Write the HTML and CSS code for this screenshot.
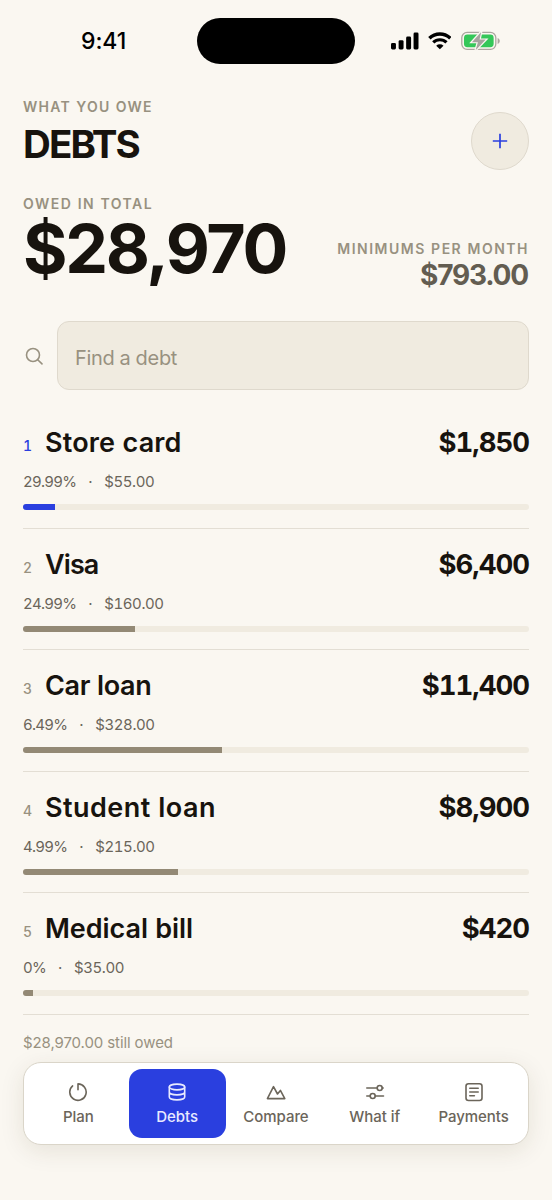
FILE: index.html
```html
<!DOCTYPE html>
<html lang="en">
<head>
<meta charset="utf-8">
<title>Debts</title>
<link rel="stylesheet" href="styles.css">
</head>
<body>
<div class="statusbar">
  <div class="clock">9:41</div>
  <div class="island"></div>
  <div class="indicators">
    <svg class="signal" width="28" height="18" viewBox="0 0 28 18"><rect x="0" y="11" width="5" height="6.5" rx="1.4"/><rect x="7.7" y="8.2" width="5" height="9.3" rx="1.4"/><rect x="15.3" y="4.5" width="5" height="13" rx="1.4"/><rect x="22.8" y="0.5" width="5" height="17" rx="1.4"/></svg>
    <svg class="wifi" width="24" height="18" viewBox="0 0 24 18"><path d="M1.400 6.200a15.200 15.200 0 0 1 21.200 0" fill="none" stroke="#000" stroke-width="3.500"/><path d="M5.300 10.500a9.600 9.600 0 0 1 13.400 0" fill="none" stroke="#000" stroke-width="3.200"/><path d="M12 17.400l-3.700-3.600a5.300 5.300 0 0 1 7.400 0z"/></svg>
    <svg class="battery" width="40" height="20" viewBox="0 0 40 20"><rect x="0.800" y="1.300" width="34.400" height="17.200" rx="5.400" fill="none" stroke="#aaa69f" stroke-width="1.300"/><rect x="3" y="3.500" width="30" height="12.800" rx="3.400" fill="#34c759"/><path d="M37 7v6c1.300-.5 2.200-1.700 2.200-3s-.9-2.500-2.200-3z" fill="#aaa69f"/><path d="M20.400.8 11 11.200h6.100L14.800 19.300 25 8.600h-6.200z" fill="#a5a49f" stroke="#faf7f1" stroke-width="2.400" paint-order="stroke"/></svg>
  </div>
</div>
<main class="screen">
  <header class="header">
    <div>
      <div class="eyebrow eyebrow-title">WHAT YOU OWE</div>
      <h1 class="title">DEBTS</h1>
    </div>
    <button class="add" aria-label="Add debt"><svg width="16" height="16" viewBox="0 0 16 16"><path d="M8 .8v14.400M.8 8h14.400"/></svg></button>
  </header>
  <section class="summary">
    <div>
      <div class="eyebrow eyebrow-total">OWED IN TOTAL</div>
      <div class="total">$28,970</div>
    </div>
    <div class="minimums">
      <div class="eyebrow eyebrow-min">MINIMUMS PER MONTH</div>
      <div class="min-value">$793.00</div>
    </div>
  </section>
  <div class="search">
    <svg width="19" height="19" viewBox="0 0 19 19"><circle cx="8" cy="8" r="6.500"/><path d="M12.700 12.700l4.300 4.200"/></svg>
    <div class="field">Find a debt</div>
  </div>
  <ul class="debts">
    <li class="debt first">
      <div class="line"><span class="rank">1</span><span class="name n1">Store card</span><span class="amount">$1,850</span></div>
      <div class="meta"><span class="rate">29.99%</span><span class="dot">·</span><span>$55.00</span></div>
      <div class="bar"><div class="fill" style="width:6.38%"></div></div>
    </li>
    <li class="debt">
      <div class="line"><span class="rank">2</span><span class="name n2">Visa</span><span class="amount">$6,400</span></div>
      <div class="meta"><span class="rate">24.99%</span><span class="dot">·</span><span>$160.00</span></div>
      <div class="bar"><div class="fill" style="width:22.1%"></div></div>
    </li>
    <li class="debt">
      <div class="line"><span class="rank">3</span><span class="name n3">Car loan</span><span class="amount">$11,400</span></div>
      <div class="meta"><span class="rate">6.49%</span><span class="dot">·</span><span>$328.00</span></div>
      <div class="bar"><div class="fill" style="width:39.35%"></div></div>
    </li>
    <li class="debt">
      <div class="line"><span class="rank">4</span><span class="name n4">Student loan</span><span class="amount">$8,900</span></div>
      <div class="meta"><span class="rate">4.99%</span><span class="dot">·</span><span>$215.00</span></div>
      <div class="bar"><div class="fill" style="width:30.7%"></div></div>
    </li>
    <li class="debt">
      <div class="line"><span class="rank">5</span><span class="name n5">Medical bill</span><span class="amount">$420</span></div>
      <div class="meta"><span class="rate">0%</span><span class="dot">·</span><span>$35.00</span></div>
      <div class="bar"><div class="fill" style="width:2%"></div></div>
    </li>
  </ul>
  <div class="owed">$28,970.00 still owed</div>
  <nav class="tabs">
    <a class="tab"><svg viewBox="0 0 20 20"><path d="M4.600 3.900a8.200 8.200 0 1 0 5.400-2v5.800"/></svg><span>Plan</span></a>
    <a class="tab active"><svg viewBox="0 0 20 20"><ellipse cx="10" cy="5" rx="7.700" ry="2.900"/><path d="M2.300 5v10c0 1.600 3.400 2.900 7.700 2.900s7.700-1.300 7.700-2.900V5M2.300 10c0 1.600 3.400 2.900 7.700 2.900s7.700-1.300 7.700-2.900"/></svg><span>Debts</span></a>
    <a class="tab"><svg viewBox="0 0 20 20"><path d="M1.400 16.600 7.500 4.700l4 7.300 2.900-3.600 4.400 8.200z"/></svg><span>Compare</span></a>
    <a class="tab"><svg viewBox="0 0 20 20"><path d="M1.800 6h10.400M17.200 6h1M1.800 14h3.400M10.200 14h8.300"/><circle cx="14.700" cy="6" r="2.500"/><circle cx="7.700" cy="14" r="2.500"/></svg><span>What if</span></a>
    <a class="tab"><svg viewBox="0 0 20 20"><rect x="2" y="1.700" width="16" height="16.800" rx="2.500"/><path d="M5.800 6.200h8.400M5.800 10h8.400M5.800 13.800h4.600"/></svg><span>Payments</span></a>
  </nav>
</main>
</body>
</html>
```
FILE: styles.css
```css
* { box-sizing: border-box; }
body {
  margin: 0;
  width: 552px;
  height: 1200px;
  overflow: hidden;
  background: #faf7f1;
  color: #17130e;
  font-family: Inter, "Liberation Sans", sans-serif;
  font-variant-numeric: tabular-nums;
}
.statusbar {
  height: 82px;
  padding: 18px 51px 0 81px;
  display: flex;
}
.clock {
  width: 116px;
  padding-top: 9px;
  font-size: 23px;
  line-height: 28px;
  font-weight: 550;
  letter-spacing: -0.1px;
  color: #000;
  font-variant-numeric: normal;
}
.island { width: 158px; height: 46px; border-radius: 23px; background: #000; }
.indicators { width: 110px; margin-left: auto; display: flex; align-items: flex-start; padding-top: 13px; }
.indicators .wifi { margin: 1px 0 0 9px; }
.indicators .signal { margin-top: 1px; }
.indicators .battery { margin-left: 10px; }
.screen { padding: 0 23px; }
.header { height: 104px; display: flex; justify-content: space-between; padding-top: 15px; }
.eyebrow { font-size: 14px; line-height: 20px; font-weight: 600; color: #989180; white-space: nowrap; }
.eyebrow-title { letter-spacing: 1.3px; }
.eyebrow-total { letter-spacing: 1.5px; }
.eyebrow-min { letter-spacing: 1.5px; }
.title { margin: 5px 0 0; font-size: 38.5px; line-height: 44px; font-weight: 700; letter-spacing: -1.9px; }
.add {
  width: 58px; height: 58px; margin-top: 15px; padding: 0;
  display: flex; align-items: center; justify-content: center;
  border: 1px solid #dfd9cd; border-radius: 50%; background: #f0ebe0;
}
.add svg { fill: none; stroke: #2a3fdf; stroke-width: 1.7; }
.summary { height: 135px; padding-top: 8px; display: flex; justify-content: space-between; }
.total { font-size: 68px; line-height: 68px; font-weight: 700; letter-spacing: -2.3px; font-variant-numeric: normal; }
.minimums { padding-top: 45px; text-align: right; }
.min-value { padding-right: 1px; font-size: 28px; line-height: 32px; font-weight: 700; letter-spacing: -1.2px; color: #635d51; font-variant-numeric: normal; }
.search { height: 69px; display: flex; align-items: center; }
.search svg { margin: 2px 13px 0 2px; fill: none; stroke: #989180; stroke-width: 1.600; stroke-linecap: round; }
.field {
  flex: 1; height: 69px; padding: 5px 18px 0 17px;
  display: flex; align-items: center;
  border: 1px solid #dfd9cd; border-radius: 12px; background: #f0ebe0;
  font-size: 20px; letter-spacing: -0.3px; color: #989180;
}
.debts { list-style: none; margin: 17px 0 0; padding: 0; }
.debt { height: 121.5px; padding-top: 18px; border-bottom: 1px solid #e3ded4; }
.line { display: flex; align-items: baseline; height: 34px; line-height: 34px; }
.rank { width: 22px; font-size: 14px; font-weight: 500; color: #989180; position: relative; top: -1px; }
.first .rank { color: #2a3fdf; }
.name { font-size: 27px; font-weight: 600; }
.n1 { letter-spacing: 0.15px; }
.n2 { letter-spacing: -0.9px; }
.n3 { letter-spacing: -0.35px; }
.n4 { letter-spacing: 0.45px; }
.n5 { letter-spacing: -0.05px; }
.amount { margin-left: auto; font-size: 27.5px; font-weight: 700; letter-spacing: -1px; }
.meta { display: flex; margin-top: 13px; font-size: 15px; line-height: 20px; color: #6b655a; letter-spacing: -0.4px; }
.rate { letter-spacing: -0.75px; }
.dot { width: 28px; text-align: center; }
.bar { height: 6px; margin-top: 12px; border-radius: 3px; overflow: hidden; background: #f0ebe0; }
.fill { height: 6px; background: #938975; }
.first .fill { background: #2a3fdf; }
.owed { margin-top: 18px; font-size: 15px; line-height: 20px; letter-spacing: -0.1px; color: #989180; font-variant-numeric: normal; }
.tabs {
  height: 83px; margin-top: 9px; padding: 6px;
  display: flex; gap: 2px;
  border: 1px solid #dad5c9; border-radius: 18px; background: #fff;
  box-shadow: 0 6px 24px rgba(60, 48, 20, 0.1);
}
.tab {
  flex: 1 1 0; min-width: 0; display: flex; flex-direction: column; align-items: center;
  padding-top: 13px; border-radius: 13px;
  font-size: 15px; line-height: 20px; font-weight: 450; letter-spacing: -0.05px; color: #6b655a;
}
.tab svg { width: 20px; height: 20px; margin-bottom: 5px; fill: none; stroke: currentColor; stroke-width: 1.600; stroke-linecap: round; stroke-linejoin: round; }
.active { background: #2a3fdf; color: #e8eaff; }
```
